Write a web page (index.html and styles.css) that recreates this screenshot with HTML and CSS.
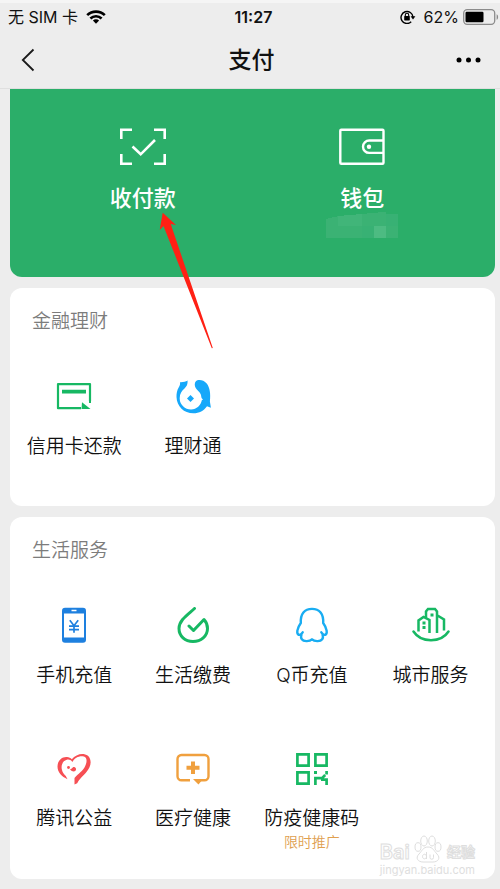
FILE: index.html
```html
<!DOCTYPE html>
<html lang="zh-CN">
<head>
<meta charset="utf-8">
<meta name="viewport" content="width=device-width, initial-scale=1">
<title>支付</title>
<link rel="stylesheet" href="styles.css">
</head>
<body>
<header class="top">
  <div class="status">
    <div class="status-left">
      <span>无 SIM 卡</span>
      <svg width="20" height="14" viewBox="0 0 20 14" aria-hidden="true"><g fill="none" stroke="#000" stroke-width="2.6"><path d="M1.2 5.2a12.5 12.5 0 0 1 17.6 0"/><path d="M4.4 8.5a8 8 0 0 1 11.2 0"/></g><path d="M6.9 10.6a4.4 4.4 0 0 1 6.2 0L10 13.7z"/></svg>
    </div>
    <time class="clock">11:27</time>
    <div class="status-right">
      <svg width="16" height="14" viewBox="0 0 16 14" aria-hidden="true"><path d="M11.2 11.8A6 6 0 1 1 13 7" fill="none" stroke="#000" stroke-width="1.4"/><path d="M10.6 6.3h4.8L13 9.4z"/><rect x="4.2" y="6" width="5.6" height="4.4" rx=".6"/><path d="M5.3 6.3V5a1.7 1.7 0 0 1 3.4 0v1.3" fill="none" stroke="#000" stroke-width="1.1"/></svg>
      <span class="percent">62%</span>
      <svg width="36" height="16" viewBox="0 0 36 16" aria-hidden="true"><rect x=".7" y=".7" width="31" height="14.6" rx="3.5" fill="none" stroke="#8b8b8b" stroke-width="1.3"/><rect x="2.5" y="2.7" width="18" height="10.6" rx="1.2"/><path d="M33.6 5.2c2 .8 2 4.8 0 5.6z" fill="#8b8b8b"/></svg>
    </div>
  </div>
  <nav class="bar">
    <button class="bar-button" aria-label="返回"><svg width="14" height="24" viewBox="0 0 14 24"><path d="M12.5 1.5 1.8 12l10.7 10.5" fill="none" stroke="#1a1a1a" stroke-width="1.8"/></svg></button>
    <h1 class="title">支付</h1>
    <button class="bar-button" aria-label="更多"><svg width="26" height="6" viewBox="0 0 26 6"><circle cx="3" cy="3" r="2.5"/><circle cx="12.5" cy="3" r="2.5"/><circle cx="22" cy="3" r="2.5"/></svg></button>
  </nav>
</header>
<main class="content">
  <section class="hero">
    <a class="hero-item" href="#pay">
      <svg width="48" height="38" viewBox="0 0 48 38" fill="none" stroke="#fff" stroke-width="2.6" aria-hidden="true"><path d="M2.3 11V1.8H13M35 1.8h10.7V11M45.7 26v9.7H35M13 35.7H2.3V26"/><path d="m13.5 18.5 8.2 7.8L36 12"/></svg>
      <span>收付款</span>
      <svg class="arrow" width="56" height="138" viewBox="0 0 56 138" aria-hidden="true"><path d="M3.7 1.7 17 14l-5.3-1L53.8 137l-1 .3L4.5 15 .7 19z" fill="#ff2014"/></svg>
    </a>
    <a class="hero-item" href="#wallet">
      <svg width="46" height="38" viewBox="0 0 46 38" fill="none" stroke="#fff" stroke-width="2.4" aria-hidden="true"><rect x="1.3" y="1.7" width="43.2" height="34" rx="1"/><path d="M44 12.5H30.2a6.2 6.2 0 0 0 0 12.4H44"/><circle cx="30" cy="18.7" r="2.2" fill="#fff" stroke="none"/></svg>
      <span>钱包</span>
      <svg class="balance" width="72" height="26" viewBox="0 0 72 26" shape-rendering="crispEdges" aria-hidden="true"><path d="M0 7 13 4 58 0h2v2h12v24H0z" fill="#3bb274"/><path d="M12 4 36 2v12H12z" fill="#41b579"/><path d="M36 14h12v12H36zM60 2h12v12H60z" fill="#38b174"/><path d="M48 14h12v12H48z" fill="#4dbb82"/></svg>
    </a>
  </section>

  <section class="card finance">
    <h2 class="card-title">金融理财</h2>
    <div class="grid">
      <a class="item" href="#credit">
        <svg class="icon" viewBox="0 0 36 36"><path d="M34 23V6.2H2v24h23" fill="none" stroke="#17b863" stroke-width="2.2" stroke-linejoin="round"/><path d="M6 11.8h24v3.8H6zM26 24.3 34.5 31H25.5zM33 6h2v19h-2z" fill="#17b863"/></svg>
        <span>信用卡还款</span>
      </a>
      <a class="item" href="#licai">
        <svg class="icon" viewBox="0 0 36 36" fill="#16a8fa"><path d="M12.6 2.6C10.5 3.8 8.500 4.300 5 4.200c.3 2-.1 3.200-1.200 5C2 12 1.400 15.500 1.500 19c.3 9.500 7.500 16.300 16.800 16.300 6 0 10.600-2.500 13.700-7l3.900 1.500-1-6.300c.9-7.500 0-14-3.200-18-3.200-3.700-8.700-4.500-11-2-1.200 1.500-1.300 4 0 6.500 1.200 2.200 4 3.500 5 6.200.6 1.500.4 2.500 1 4l1.300 1.300-1.200.8c-.8 5-5.200 9.200-10.600 9.200A11.300 11.300 0 0 1 4.700 20.200c0-4.500 2.200-7.500 4.800-9.700C11.700 8.500 12.800 6.400 12.600 2.600z"/><path d="m15.500 17 3.500 3.500-3.500 3.500-3.500-3.500z"/></svg>
        <span>理财通</span>
      </a>
    </div>
  </section>

  <section class="card life">
    <h2 class="card-title">生活服务</h2>
    <div class="grid">
      <a class="item" href="#topup">
        <svg class="icon" viewBox="0 0 36 36"><rect x="6" y=".8" width="24" height="35" rx="3" fill="#1e80df"/><path d="M8 6.500h20v24H8z" fill="#fff"/><path d="M15.500 3.500h5" stroke="#fff" stroke-width="1.5"/><path d="m13.800 13.200 4.200 5.500 4.200-5.500M18 18.700v7M13 19.100h10M13 22.600h10" fill="none" stroke="#1e80df" stroke-width="1.7"/></svg>
        <span>手机充值</span>
      </a>
      <a class="item" href="#bills">
        <svg class="icon" viewBox="0 0 36 36" fill="none" stroke="#17b863" stroke-width="3" stroke-linecap="round" stroke-linejoin="round"><path d="M19.500 1.500C13 7.500 4 13 4 21.500 4 29 10 34.500 18 34.500S32.500 29 32.500 21.500c0-3.500-1.200-6.500-3.500-9L18.500 23.500 14 19"/></svg>
        <span>生活缴费</span>
      </a>
      <a class="item" href="#qcoin">
        <svg class="icon" viewBox="0 0 36 36" fill="none" stroke="#19adf2" stroke-width="2.4" stroke-linecap="round" stroke-linejoin="round"><path d="M8.700 25.300c-1.200 1.800-2.600 2.800-3.900 2.600-2.500-1-2-6.300 2-11.900C6.300 7 10.500 1.900 18 1.900S29.700 7 29.200 16c4 5.600 4.500 10.900 2 11.900-1.300.2-2.700-.8-3.900-2.600M7.500 27.500c-1.300 4 .5 6.500 4.800 6.600 2.500.1 4.500-.5 5.700-1.800 1.200 1.300 3.200 1.900 5.700 1.800 4.300-.1 6.100-2.600 4.800-6.600"/></svg>
        <span>Q币充值</span>
      </a>
      <a class="item" href="#city">
        <svg class="icon wide" viewBox="0 0 38 36" fill="none" stroke="#17b863" stroke-width="2.5"><path d="M1.500 24.500c7.500 11.600 27.500 11.600 35 0" stroke-linecap="round"/><path d="M6.500 24.500V13.500l5-3.500 6 3V26M14 11V4.500L16 2h7l2 2.500V26M25.500 8.500l6.500 4v11"/><path d="M10.500 14.500h3v3h-3zM10.500 19h3v3h-3zM18.500 6.500h3v3h-3z" fill="#17b863" stroke="none"/></svg>
        <span>城市服务</span>
      </a>
      <a class="item" href="#charity">
        <svg class="icon" viewBox="0 0 36 36" fill="#f64f54"><path d="M11.500 29.200C5.500 26.500 1.400 22 1.500 16.300 1.600 10.500 6 6.500 11 7c2 .2 3.600.9 4.800 2.200C19 5.500 24 3.400 28.500 4.300c5.800 1.200 7.500 7.200 5 13-2.500 5.900-8.700 9.500-12.300 15.900L18.500 34.500V28c3.500-4 8.500-7 10.600-11.700 2.300-5 1.900-8.700-1.300-9.700-4-1.200-9 1-11.400 5.400C14.800 10 12.800 9.200 10.800 9.800c-4.200 1.200-5.800 5.400-5 9.400.5 2.700 2 5 4 6.800z"/><circle cx="12.500" cy="17.500" r="1.400"/><path d="M14 19.200c1.300-.2 2.200-1.200 3.300-2.300 2.500 0 3.500 2 2.200 3.800-1.500 1.300-3.700.8-5.500-1.500z"/></svg>
        <span>腾讯公益</span>
      </a>
      <a class="item" href="#health">
        <svg class="icon" viewBox="0 0 36 36"><path d="M15 30.300H6.500a4 4 0 0 1-4-4V9a4 4 0 0 1 4-4h23a4 4 0 0 1 4 4v17.300a4 4 0 0 1-4 4h-5" fill="none" stroke="#f0a03e" stroke-width="2.4"/><path d="M16 11.500h4v4.300h4.500v4H20V24h-4v-4.200h-4.500v-4H16zM18 29h10l-4.500 5.500z" fill="#f0a03e"/></svg>
        <span>医疗健康</span>
      </a>
      <a class="item" href="#code">
        <svg class="icon" viewBox="0 0 36 36"><g fill="none" stroke="#17b863" stroke-width="2.7"><path d="M3.400 4.400h11.200v11.200H3.400zM21.400 4.400h11.200v11.200H21.400zM3.400 22.400h11.200v11.200H3.400z"/><path d="M21.400 34.900v-6.700H28l3.200-3.200M32.600 21v3.500M32.600 34.900v-5.300H27"/></g><path d="M20 21h3v3h-3z" fill="#17b863"/></svg>
        <span>防疫健康码</span>
        <small class="promo">限时推广</small>
      </a>
    </div>
    <div class="watermark">
      <div class="brand">
        <span>Bai</span>
        <svg width="28" height="28" viewBox="0 0 28 28" fill="#fff" stroke="#dedede" aria-hidden="true"><ellipse cx="4" cy="12" rx="3" ry="4.300"/><ellipse cx="10" cy="6" rx="3.300" ry="5"/><ellipse cx="18" cy="6" rx="3.300" ry="5"/><ellipse cx="24" cy="12" rx="3" ry="4.300"/><path d="M14 12c5 0 6 4 9 7 4 4 1 8-4 8H9c-5 0-8-4-4-8 3-3 4-7 9-7z"/><path d="M12.500 17v7M12.500 21.500a2 2.300 0 1 0 0 .1M16 19.500v3a1.700 1.700 0 0 0 3.500 0v-3"/></svg>
        <span class="brand-cn">经验</span>
      </div>
      <div class="site">jingyan.baidu.com</div>
    </div>
  </section>
</main>
</body>
</html>
```
FILE: styles.css
```css
* {
  box-sizing: border-box;
}

body {
  margin: 0;
  min-height: 100vh;
  background: #ededed;
  color: #111;
  font-family: Inter, "Noto Sans CJK SC", sans-serif;
}

a {
  color: inherit;
  text-decoration: none;
}

.top {
  border-top: 3px solid #f5f5f5;
  border-bottom: 1px solid #dfdfdf;
}

.status {
  display: grid;
  grid-template-columns: 1fr auto 1fr;
  align-items: center;
  height: 28px;
  padding: 0 1px 0 8px;
  font-size: 16px;
  line-height: 24px;
}

.status-left,
.status-right {
  display: flex;
  align-items: center;
  gap: 8px;
}

.status-right {
  justify-content: flex-end;
  gap: 4px;
}

.percent {
  margin-left: 4px;
}

.clock {
  font-weight: 600;
}

.bar {
  display: flex;
  align-items: center;
  justify-content: space-between;
  height: 57px;
  padding: 0 18px 0 21px;
}

.bar-button {
  display: flex;
  align-items: center;
  width: 26px;
  height: 32px;
  padding: 0;
  border: 0;
  background: none;
}

.title {
  margin: 0;
  font-size: 23px;
  font-weight: 500;
  line-height: 32px;
}

.content {
  display: flex;
  flex-direction: column;
  gap: 11px;
  padding: 0 5px 10px 10px;
}

.hero {
  display: grid;
  grid-template-columns: 1fr 1fr;
  padding: 39px 23px;
  border-radius: 0 0 12px 12px;
  background: #2bae69;
  color: #fff;
}

.hero-item {
  position: relative;
  display: flex;
  flex-direction: column;
  align-items: center;
  gap: 18px;
  font-size: 22px;
  font-weight: 500;
  line-height: 28px;
}

.balance {
  margin-top: -18px;
}

.arrow {
  position: absolute;
  top: 83px;
  left: calc(50% + 16px);
  z-index: 1;
}

.card {
  position: relative;
  padding: 22px 5px 28px;
  border-radius: 12px;
  background: #fff;
}

.finance {
  padding-bottom: 47px;
}

.card-title {
  margin: 0 0 44px;
  padding-left: 17px;
  color: #7c7c7c;
  font-size: 19px;
  font-weight: 350;
  line-height: 24px;
}

.grid {
  display: grid;
  grid-template-columns: repeat(4, 1fr);
  row-gap: 62px;
}

.item {
  display: flex;
  flex-direction: column;
  align-items: center;
  font-size: 19px;
  font-weight: 350;
  line-height: 24px;
  white-space: nowrap;
}

.icon {
  width: 36px;
  height: 36px;
  margin-bottom: 21px;
}

.wide {
  width: 38px;
}

.promo {
  margin-top: 2px;
  color: #e0a050;
  font-size: 14px;
  line-height: 18px;
}

.watermark {
  position: absolute;
  right: 20px;
  bottom: 2px;
  color: #dedede;
}

.brand {
  display: flex;
  align-items: flex-end;
  justify-content: space-between;
  gap: 1px;
  color: #fff;
  font-size: 20px;
  font-weight: 600;
  line-height: 22px;
  -webkit-text-stroke: 1px #dedede;
}

.brand-cn {
  font-size: 14px;
}

.site {
  font-size: 11px;
  line-height: 14px;
}
```
